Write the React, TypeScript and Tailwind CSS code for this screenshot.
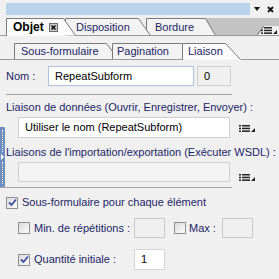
import type { ReactNode } from "react";

//! Small pieces

function Tab({
  width,
  height,
  slant,
  active,
  bold,
  z,
  className,
  children,
}: {
  width: number;
  height: number;
  slant: number;
  active?: boolean;
  bold?: boolean;
  z: string;
  className?: string;
  children: ReactNode;
}) {
  const w = width;
  const h = height;
  return (
    <div className={`relative flex shrink-0 items-center ${z} ${className ?? ""}`} style={{ width: w, height: h }}>
      <svg className="absolute inset-0" width={w} height={h} viewBox={`0 0 ${w} ${h}`}>
        <path
          d={`M0.5 ${h} L0.5 0.5 L${w - slant - 0.5} 0.5 L${w - 0.5} ${h - 0.5} Z`}
          fill={active ? "#fbfbfb" : "#f3f3f3"}
        />
        <path
          d={`M0.5 ${h} L0.5 0.5 L${w - slant - 0.5} 0.5 L${w - 0.5} ${h - 0.5}`}
          fill="none"
          stroke="#7a7a7a"
        />
        {!active && <line x1="0" y1={h - 0.5} x2={w} y2={h - 0.5} stroke="#9a9a9a" />}
      </svg>
      <span className={`relative whitespace-nowrap ${bold ? "font-bold text-black text-[12px]" : "text-[#1b2566]"}`}>
        {children}
      </span>
    </div>
  );
}

function MenuIcon() {
  return (
    <svg width="16" height="7" viewBox="0 0 16 7">
      <rect x="0" y="0" width="2" height="1.5" fill="#222" />
      <rect x="3" y="0" width="8" height="1.5" fill="#222" />
      <rect x="0" y="2.7" width="2" height="1.5" fill="#222" />
      <rect x="3" y="2.7" width="8" height="1.5" fill="#222" />
      <rect x="0" y="5.4" width="2" height="1.5" fill="#222" />
      <rect x="3" y="5.4" width="8" height="1.5" fill="#222" />
      <path d="M16 3 L16 7 L12 7 Z" fill="#222" />
    </svg>
  );
}

function Check({ checked }: { checked?: boolean }) {
  return (
    <div className="flex h-[12px] w-[12px] shrink-0 items-center justify-center border border-[#8e8f8f] bg-gradient-to-br from-[#dcdcdc] to-[#fbfbfb]">
      {checked && (
        <svg width="9" height="9" viewBox="0 0 9 9">
          <path d="M1 4.5 L3.5 7 L8 1.5" fill="none" stroke="#3d4f9a" strokeWidth="1.8" />
        </svg>
      )}
    </div>
  );
}

//! Panel

export default function App() {
  return (
    <div
      className="relative h-[279px] w-[279px] overflow-hidden whitespace-nowrap bg-[#f0f0f0] text-[11px] leading-[13px] text-[#1b2566]"
      style={{ fontFamily: '"Liberation Sans", Arial, sans-serif' }}
    >
      {/* Title bar */}
      <div className="flex h-[17px] items-start pt-[3px]">
        <div className="ml-[6px] h-[12px] w-[244px] bg-[#b9d1ea]" />
        <div className="flex h-[12px] flex-1 items-center justify-end gap-[7px] pr-[5px]">
          <svg width="6" height="4" viewBox="0 0 6 4">
            <path d="M0 0 L6 0 L3 4 Z" fill="#111" />
          </svg>
          <svg width="7" height="7" viewBox="0 0 7 7">
            <path d="M1 1 L6 6 M6 1 L1 6" stroke="#111" strokeWidth="1.8" />
          </svg>
        </div>
      </div>

      {/* Tabs row 1 */}
      <div className="flex h-[19px] items-end">
        <div className="h-[19px] w-[6px] shrink-0 border-b border-[#9a9a9a]" />
        <Tab width={70} height={18} slant={12} active bold z="z-30" className="pl-[7px]">
          <span className="flex items-center gap-[5px]">
            Objet
            <span className="flex h-[9px] w-[9px] items-center justify-center border border-[#6a6a6a] bg-[#c8c8c8]">
              <svg width="5" height="5" viewBox="0 0 5 5">
                <path d="M0.5 0.5 L4.5 4.5 M4.5 0.5 L0.5 4.5" stroke="#000" strokeWidth="1.4" />
              </svg>
            </span>
          </span>
        </Tab>
        <Tab width={86} height={18} slant={12} z="z-20" className="-ml-[11px] pl-[11px]">
          Disposition
        </Tab>
        <Tab width={70} height={18} slant={10} z="z-10" className="-ml-[5px] pl-[9px]">
          Bordure
        </Tab>
        <div className="relative -ml-[12px] flex h-[18px] flex-1 items-end border-b border-[#9a9a9a] bg-[#c3c3c3]">
          <div className="ml-auto flex h-[9px] w-[21px] items-center justify-end pr-[2px] [clip-path:polygon(6px_0,100%_0,100%_100%,0_100%)] bg-[#f0f0f0]">
            <MenuIcon />
          </div>
          <svg className="absolute bottom-0 right-[15px]" width="7" height="9" viewBox="0 0 7 9">
            <path d="M0 9 L6.5 0.5 L7 0.5" fill="none" stroke="#6a6a6a" />
          </svg>
        </div>
      </div>

      {/* Tabs row 2 */}
      <div className="flex h-[24px] items-end">
        <div className="h-[17px] w-[14px] shrink-0 border-b border-[#9a9a9a]" />
        <Tab width={105} height={17} slant={12} z="z-10" className="pl-[7px]">
          Sous-formulaire
        </Tab>
        <Tab width={82} height={17} slant={12} z="z-20" className="-ml-[7px] pl-[5px]">
          Pagination
        </Tab>
        <Tab width={59} height={17} slant={15} active z="z-30" className="-ml-[12px] pl-[6px]">
          Liaison
        </Tab>
        <div className="h-[17px] flex-1 border-b border-[#9a9a9a]" />
      </div>

      {/* Nom */}
      <div className="mt-[6px] flex h-[20px] items-center pl-[6px]">
        <span className="w-[42px]">Nom :</span>
        <div className="flex h-[20px] w-[146px] items-center border border-[#a9c3e0] bg-white pl-[6px] text-black">
          RepeatSubform
        </div>
        <div className="ml-[3px] flex h-[20px] w-[34px] items-center border border-[#d0d0d0] bg-[#f0f0f0] pl-[6px] text-black">
          0
        </div>
      </div>

      <div className="mt-[8px] ml-[6px] h-px w-[226px] bg-[#a0a0a0]" />

      {/* Liaison de données */}
      <div className="mt-[6px] pl-[6px]">Liaison de données (Ouvrir, Enregistrer, Envoyer) :</div>
      <div className="mt-[3px] flex items-center">
        <div className="ml-[18px] flex h-[21px] w-[212px] items-center border border-[#cfcfcf] bg-white pl-[6px] text-black">
          Utiliser le nom (RepeatSubform)
        </div>
        <div className="ml-[9px] pt-[2px]">
          <MenuIcon />
        </div>
      </div>

      <div className="mt-[8px] pl-[6px]">Liaisons de l'importation/exportation (Exécuter WSDL) :</div>
      <div className="mt-[3px] flex items-center">
        <div className="ml-[18px] h-[20px] w-[212px] border border-[#d0d0d0] bg-[#f3f3f3]" />
        <div className="ml-[9px] pt-[10px]">
          <MenuIcon />
        </div>
      </div>

      <div className="mt-[5px] h-px w-[232px] bg-[#a0a0a0]" />

      {/* Sous-formulaire pour chaque élément */}
      <div className="mt-[8px] flex items-center gap-[4px] pl-[6px]">
        <Check checked />
        Sous-formulaire pour chaque élément
      </div>

      <div className="mt-[9px] flex h-[20px] items-center pl-[18px]">
        <Check />
        <span className="ml-[4px] w-[100px]">Min. de répétitions :</span>
        <div className="h-[20px] w-[31px] border border-[#c8c8c8] bg-[#f0f0f0]" />
        <div className="ml-[9px]">
          <Check />
        </div>
        <span className="ml-[3px] w-[33px]">Max :</span>
        <div className="h-[20px] w-[31px] border border-[#c8c8c8] bg-[#f0f0f0]" />
      </div>

      <div className="mt-[11px] flex h-[21px] items-center pl-[18px]">
        <Check checked />
        <span className="ml-[4px] w-[100px]">Quantité initiale :</span>
        <div className="flex h-[21px] w-[31px] items-center border border-[#d6d6d6] bg-white pl-[6px] text-black">
          1
        </div>
      </div>

      {/* Splitter handle */}
      <div className="absolute left-0 top-[127px] flex h-[60px] w-[5px] flex-col items-center justify-center gap-[2px] rounded-r-[1px] bg-[#6c8dbd]">
        <div className="h-[22px] w-px border-l border-dotted border-white" />
        <svg width="3" height="6" viewBox="0 0 3 6">
          <path d="M0 0 L3 3 L0 6 Z" fill="#fff" />
        </svg>
        <div className="h-[22px] w-px border-l border-dotted border-white" />
      </div>
    </div>
  );
}
